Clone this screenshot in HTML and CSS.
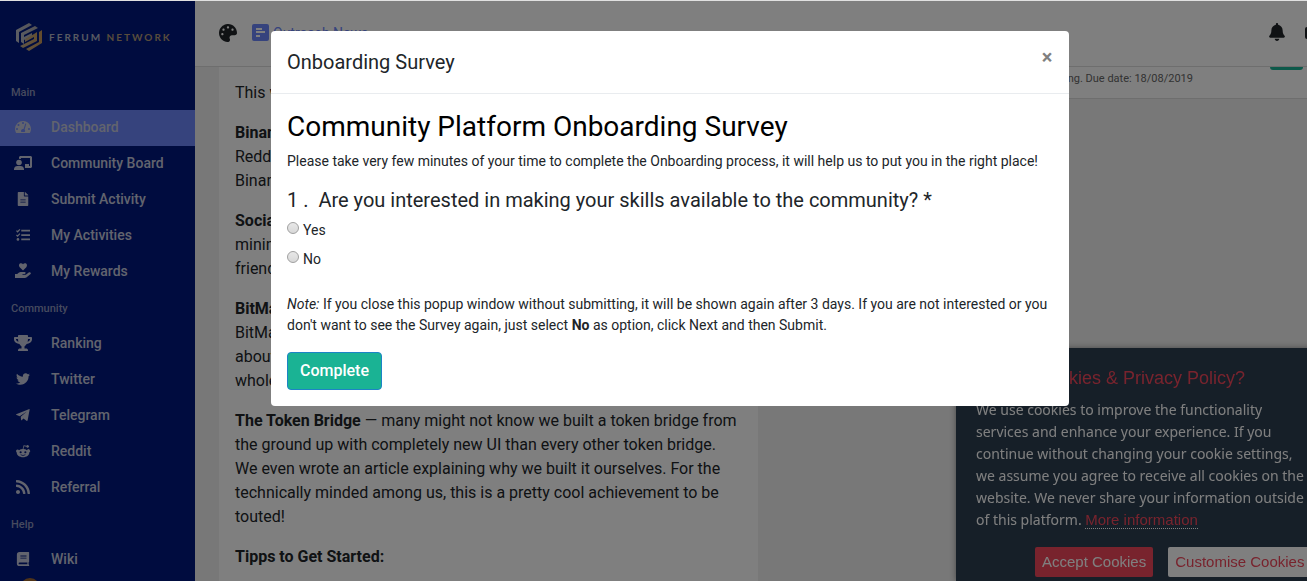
FILE: index.html
```html
<!DOCTYPE html>
<html lang="en">
<head>
    <meta charset="UTF-8">
    <meta name="viewport" content="width=device-width, initial-scale=1.0">
    <title>Ferrum Network - Dashboard</title>
    <link rel="stylesheet" href="styles.css">
</head>
<body>
    <div class="app">
        <aside class="sidebar">
            <a class="logo" href="#">
                <svg class="logo-mark" viewBox="0 0 28 30">
                    <defs>
                        <linearGradient id="silver" x1="0" y1="0" x2="1" y2="0"><stop offset="0" stop-color="#b8bcc8"/><stop offset="1" stop-color="#a8a4a8"/></linearGradient>
                        <linearGradient id="gold" x1="0" y1="0" x2="1" y2="0"><stop offset="0" stop-color="#c0ac8c"/><stop offset="1" stop-color="#c89858"/></linearGradient>
                    </defs>
                    <path fill="url(#silver)" d="M1 8 14 1l3 2L4 10v11l-3-2zM6 11l14-7 3 2L9 13v2l8-4v3l-8 4v4l-3-2z"/>
                    <path fill="url(#gold)" d="M27 8v13L14 29l-3-2 13-7V10zM19 12l3-2v9L8 26l-3-2 14-7v-2l-9 5v-3z"/>
                </svg>
                <span class="logo-text">FERRUM <span class="logo-gold">NETWORK</span></span>
            </a>
            <nav class="menu">
                <h6 class="menu-label">Main</h6>
                <a class="menu-item active" href="#">
                    <svg class="icon" viewBox="0 0 16 16"><path fill-rule="evenodd" d="M8 2a8 8 0 0 0-8 8c0 1.500.4 2.800 1.100 4h13.800A8 8 0 0 0 8 2zM8 3a1 1 0 1 1 0 2 1 1 0 0 1 0-2zM3.500 5a1 1 0 1 1 0 2 1 1 0 0 1 0-2zM2 9a1 1 0 1 1 0 2 1 1 0 0 1 0-2zM14 9a1 1 0 1 1 0 2 1 1 0 0 1 0-2zM10.300 4.500l1 .3-1.700 5.600a2 2 0 0 1 0 2.600H6.400a2 2 0 0 1 2.200-3z"/></svg>
                    Dashboard
                </a>
                <a class="menu-item" href="#">
                    <svg class="icon wide" viewBox="0 0 18 16"><path d="M6 1h11l1 1v10l-1 1h-6v-2h5V3H7v1a4 4 0 0 0-2 0V2z"/><circle cx="5" cy="7.500" r="2.800"/><path d="M0 15v-1a3.500 3.500 0 0 1 3.500-3h3A3.500 3.500 0 0 1 10 14v1z"/><path d="M11 9h4v2h-4z"/></svg>
                    Community Board
                </a>
                <a class="menu-item" href="#">
                    <svg class="icon small" viewBox="0 0 384 512"><path d="M224 136V0H24C10.700 0 0 10.700 0 24v464c0 13.300 10.700 24 24 24h336c13.300 0 24-10.700 24-24V160H248c-13.200 0-24-10.800-24-24zm64 248H96v-32h192zm0-80H96v-32h192zM384 122v6H256V0h6c6 0 12 2 17 7l98 98c5 5 7 11 7 17z"/></svg>
                    Submit Activity
                </a>
                <a class="menu-item" href="#">
                    <svg class="icon small" viewBox="0 0 16 16"><path d="M6 2h10v2H6zM6 7h10v2H6zM6 12h10v2H6z"/><path d="M.5 3l1.300 1.300L4.500 1.500M.5 8l1.300 1.300L4.500 6.500" fill="none" stroke="currentColor" stroke-width="1.400"/><circle cx="2.200" cy="13" r="1.500"/></svg>
                    My Activities
                </a>
                <a class="menu-item" href="#">
                    <svg class="icon" viewBox="0 0 16 16"><path d="M8 7.500 4.700 4.200C3.300 2.500 4.200.3 6 .3c.9 0 1.500.4 2 1 .5-.6 1.100-1 2-1 1.800 0 2.700 2.200 1.300 3.900z"/><path d="M0 11h2.200l1.500-1.200c.6-.5 1.300-.7 2-.7h4c1.300 0 1.300 1.900 0 1.900H7.500v.7h3.300l2.900-2.300c1.200-.8 2.900.5 1.900 1.700l-4.200 3.500c-.4.300-.9.400-1.400.4H0z"/></svg>
                    My Rewards
                </a>
                <h6 class="menu-label">Community</h6>
                <a class="menu-item" href="#">
                    <svg class="icon" viewBox="0 0 576 512"><path d="M552 64H448V24c0-13.300-10.700-24-24-24H152c-13.300 0-24 10.700-24 24v40H24C10.700 64 0 74.700 0 88v56c0 35.700 22.500 72.400 61.900 100.700 31.500 22.700 69.800 37.100 110 41.700C203.300 338.500 240 360 240 360v72h-48c-35.300 0-64 20.700-64 56v12c0 6.600 5.400 12 12 12h296c6.600 0 12-5.400 12-12v-12c0-35.300-28.700-56-64-56h-48v-72s36.700-21.500 68.100-73.600c40.300-4.600 78.600-19 110-41.700 39.300-28.300 61.900-65 61.900-100.700V88c0-13.300-10.700-24-24-24zM99.300 192.800C74.900 175.200 64 155.600 64 144v-16h64.200c1 32.600 5.800 61.200 12.800 86.200-15.100-5.200-29.200-12.400-41.700-21.400zM512 144c0 16.100-17.700 36.100-35.300 48.800-12.500 9-26.700 16.200-41.800 21.400 7-25 11.800-53.600 12.800-86.200H512v16z"/></svg>
                    Ranking
                </a>
                <a class="menu-item" href="#">
                    <svg class="icon small" viewBox="0 0 512 512"><path d="M459.370 151.716c.325 4.548.325 9.097.325 13.645 0 138.720-105.583 298.558-298.558 298.558-59.452 0-114.680-17.219-161.137-47.106 8.447.974 16.568 1.299 25.340 1.299 49.055 0 94.213-16.568 130.274-44.832-46.132-.975-84.792-31.188-98.112-72.772 6.498.974 12.995 1.624 19.818 1.624 9.421 0 18.843-1.300 27.614-3.573-48.081-9.747-84.143-51.980-84.143-102.985v-1.299c13.969 7.797 30.214 12.670 47.431 13.319-28.264-18.843-46.781-51.005-46.781-87.391 0-19.492 5.197-37.360 14.294-52.954 51.655 63.675 129.300 105.258 216.365 109.807-1.624-7.797-2.599-15.918-2.599-24.040 0-57.828 46.782-104.934 104.934-104.934 30.213 0 57.502 12.670 76.670 33.137 23.715-4.548 46.456-13.320 66.599-25.340-7.798 24.366-24.366 44.833-46.132 57.827 21.117-2.273 41.584-8.122 60.426-16.243-14.292 20.791-32.161 39.308-52.628 54.253z"/></svg>
                    Twitter
                </a>
                <a class="menu-item" href="#">
                    <svg class="icon small" viewBox="0 0 16 16"><path d="M15.600 1.800 13.300 14c-.2.900-.7 1-1.300.6l-3.500-2.600-1.700 1.700c-.5.500-1 .3-1-.4l-.4-3.300 7-6-8.200 5.300-3.500-1.200c-.8-.3-.8-.9.200-1.300l13.700-5.500c.7-.2 1.200.1 1 .5z"/></svg>
                    Telegram
                </a>
                <a class="menu-item" href="#">
                    <svg class="icon small" viewBox="0 0 16 16"><path fill-rule="evenodd" d="M2 6.200a1.900 1.900 0 0 0-1.200 3.400C.8 12.700 4 15 8 15s7.200-2.300 7.200-5.400A1.900 1.900 0 1 0 12.600 7 8.800 8.800 0 0 0 8.500 5.700L9.300 2.500l2.600.6a1.500 1.500 0 1 0 .1-1L8.700 1.300 7.600 5.700A8.800 8.800 0 0 0 3.400 7 1.900 1.900 0 0 0 2 6.200zM5.300 8.200a1.200 1.200 0 1 1 0 2.400 1.200 1.200 0 0 1 0-2.400zM10.700 8.200a1.200 1.200 0 1 1 0 2.400 1.200 1.200 0 0 1 0-2.400zM5.300 11.800c1.600 1 3.800 1 5.400 0v.7c-1.600 1.200-3.800 1.200-5.400 0z"/></svg>
                    Reddit
                </a>
                <a class="menu-item" href="#">
                    <svg class="icon small" viewBox="0 32 448 448"><path d="M128.081 415.959c0 35.369-28.672 64.041-64.041 64.041S0 451.328 0 415.959s28.672-64.041 64.041-64.041 64.040 28.673 64.040 64.041zm175.660 47.250c-8.354-154.600-132.185-278.587-286.950-286.950C7.656 175.765 0 183.105 0 192.253v48.069c0 8.415 6.490 15.472 14.887 16.018 111.832 7.284 201.473 96.702 208.772 208.772.547 8.397 7.604 14.887 16.018 14.887h48.069c9.149.001 16.489-7.655 15.995-16.790zm144.249.288C439.596 229.677 251.465 40.445 16.503 32.010 7.473 31.686 0 38.981 0 48.016v48.068c0 8.625 6.835 15.645 15.453 15.999 191.179 7.839 344.627 161.316 352.465 352.465.353 8.618 7.373 15.453 15.999 15.453h48.068c9.034-.001 16.329-7.474 16.005-16.504z"/></svg>
                    Referral
                </a>
                <h6 class="menu-label">Help</h6>
                <a class="menu-item" href="#">
                    <svg class="icon small" viewBox="0 0 16 16"><path fill-rule="evenodd" d="M4 0h10.500l.5.700V11l-.6.900v2.200l.6.700V16H4a3 3 0 0 1-3-3V3a3 3 0 0 1 3-3zM5 4v1h7V4zM5 6.500v1h7v-1zM4 12a1 1 0 0 0 0 2h9v-2z"/></svg>
                    Wiki
                </a>
            </nav>
            <div class="user"><span class="avatar"></span></div>
        </aside>

        <div class="main">
            <header class="topbar">
                <svg class="palette" viewBox="0 0 512 512"><path d="M204.300 5C104.900 24.400 24.800 104.300 5.200 203.400c-37 187 131.700 326.400 258.800 306.700 41.200-6.400 61.400-54.600 42.500-91.700-23.100-45.400 9.900-98.400 60.900-98.400h79.700c35.800 0 64.800-29.600 64.900-65.300C511.500 97.100 368.100-26.900 204.300 5zM96 320c-17.700 0-32-14.300-32-32s14.300-32 32-32 32 14.300 32 32-14.300 32-32 32zm32-128c-17.700 0-32-14.300-32-32s14.300-32 32-32 32 14.300 32 32-14.300 32-32 32zm128-64c-17.700 0-32-14.300-32-32s14.300-32 32-32 32 14.300 32 32-14.300 32-32 32zm128 64c-17.700 0-32-14.300-32-32s14.300-32 32-32 32 14.300 32 32-14.300 32-32 32z"/></svg>
                <a class="news" href="#">
                    <svg class="news-icon" viewBox="0 0 17 17"><path fill-rule="evenodd" d="M2 0h13a2 2 0 0 1 2 2v13a2 2 0 0 1-2 2H2a2 2 0 0 1-2-2V2a2 2 0 0 1 2-2zM4 4v2h6V4zM4 7v2h9V7zM4 11v2h4v-2z"/></svg>
                    <span>Outreach News</span>
                </a>
                <svg class="bell" viewBox="0 0 448 512"><path d="M224 512c35.320 0 63.970-28.650 63.970-64H160.030c0 35.350 28.650 64 63.970 64zm215.390-149.710c-19.320-20.760-55.470-51.990-55.470-154.290 0-77.700-54.480-139.900-127.940-155.160V32c0-17.670-14.320-32-31.980-32s-31.980 14.330-31.980 32v20.840C118.560 68.100 64.080 130.300 64.080 208c0 102.300-36.150 133.530-55.470 154.290-6 6.450-8.660 14.160-8.610 21.710.11 16.400 12.980 32 32.100 32h383.800c19.120 0 32-15.600 32.100-32 .05-7.550-2.610-15.270-8.610-21.710z"/></svg>
                <span class="profile"></span>
            </header>
            <div class="content">
                <article class="card post">
                    <p>This week at Ferrum</p>
                    <p><b>Binance Chain</b><br>Reddit and Telegram<br>Binance community</p>
                    <p><b>Social mining</b><br>mining made simple<br>friendly for everyone</p>
                    <p><b>BitMax listing</b><br>BitMax users heard<br>about us and the<br>whole network</p>
                    <p><b>The Token Bridge</b> — many might not know we built a token bridge from the ground up with completely new UI than every other token bridge. We even wrote an article explaining why we built it ourselves. For the technically minded among us, this is a pretty cool achievement to be touted!</p>
                    <p><b>Tipps to Get Started:</b></p>
                </article>
                <section class="card task">
                    <span class="due">Pending. Due date: 18/08/2019</span>
                    <span class="tag"></span>
                </section>
            </div>
        </div>
    </div>

    <section class="cookies">
        <h4 class="cookies-title">Cookies &amp; Privacy Policy?</h4>
        <p class="cookies-text">We use cookies to improve the functionality<br>services and enhance your experience. If you<br>continue without changing your cookie settings,<br>we assume you agree to receive all cookies on the<br>website. We never share your information outside<br>of this platform. <a href="#">More information</a></p>
        <div class="cookies-actions">
            <button class="btn-accept" type="button">Accept Cookies</button>
            <button class="btn-customise" type="button">Customise Cookies</button>
        </div>
    </section>

    <div class="backdrop">
        <div class="modal" role="dialog" aria-labelledby="modal-title">
            <div class="modal-header">
                <h5 class="modal-title" id="modal-title">Onboarding Survey</h5>
                <button class="close" type="button" aria-label="Close">×</button>
            </div>
            <form class="modal-body">
                <h3 class="survey-title">Community Platform Onboarding Survey</h3>
                <p>Please take very few minutes of your time to complete the Onboarding process, it will help us to put you in the right place!</p>
                <fieldset class="question">
                    <legend>1 .&nbsp; Are you interested in making your skills available to the community? *</legend>
                    <label class="option"><input type="radio" name="skills" value="yes"><span>Yes</span></label>
                    <label class="option"><input type="radio" name="skills" value="no"><span>No</span></label>
                </fieldset>
                <p class="note"><i>Note:</i> If you close this popup window without submitting, it will be shown again after 3 days. If you are not interested or you don't want to see the Survey again, just select <b>No</b> as option, click Next and then Submit.</p>
                <button class="btn-complete" type="button">Complete</button>
            </form>
        </div>
    </div>
</body>
</html>
```
FILE: styles.css
```css
* {
    margin: 0;
    padding: 0;
    box-sizing: border-box;
}

body {
    font-family: Roboto, "Liberation Sans", sans-serif;
    font-size: 16px;
    line-height: 24px;
    color: #212529;
    background: #f0f0f0;
    border-top: 1px solid #e0e0e0;
    height: 100vh;
    overflow: hidden;
}

a {
    color: inherit;
    text-decoration: none;
}

button {
    font: inherit;
    cursor: pointer;
}

/* Layout */
.app {
    display: flex;
    height: 100%;
}

.sidebar {
    flex: 0 0 195px;
    background: #00187e;
    color: #c4c8dc;
    overflow: hidden;
}

.main {
    flex: 1;
    min-width: 0;
}

/* Sidebar */
.logo {
    display: flex;
    align-items: center;
    gap: 6px;
    height: 73px;
    padding: 0 0 2px 15px;
}

.logo-mark {
    width: 28px;
    height: 30px;
}

.logo-text {
    font: 700 10px/16px Lato, sans-serif;
    letter-spacing: 2px;
    color: #b0b4c4;
    white-space: nowrap;
}

.logo-gold {
    color: #b09878;
}

.menu-label {
    height: 36px;
    font-size: 11px;
    font-weight: 500;
    line-height: 38px;
    padding-left: 11px;
    color: #8c94bc;
}

.menu-item {
    display: flex;
    align-items: center;
    gap: 19px;
    height: 36px;
    padding: 0 0 2px 14px;
    font-size: 14px;
    font-weight: 500;
}

.menu-item.active {
    background: #6c86fa;
}

.icon {
    width: 18px;
    height: 16px;
    fill: currentColor;
}

.icon.small {
    height: 14px;
}

.user {
    padding-left: 20px;
}

.avatar {
    display: block;
    width: 20px;
    height: 20px;
    border-radius: 50%;
    background: #a06830;
}

/* Top bar */
.topbar {
    display: flex;
    align-items: center;
    gap: 15px;
    height: 66px;
    padding: 0 0 2px 24px;
    background: #fff;
    border-bottom: 1px solid #dcdcdc;
}

.palette,
.bell {
    width: 18px;
    height: 18px;
    fill: #212529;
}

.bell {
    margin: 0 4px 2px 0;
}

.news {
    display: flex;
    align-items: center;
    gap: 4px;
    flex: 1;
    font-size: 14px;
    color: #6c86fa;
}

.news-icon {
    width: 17px;
    height: 17px;
    fill: #6c86fa;
}

.profile {
    width: 2px;
    height: 12px;
    border-radius: 2px 0 0 2px;
    background: #212529;
}

/* Content */
.content {
    display: flex;
    align-items: flex-start;
    gap: 16px;
    padding-left: 24px;
}

.card {
    background: #fff;
}

.post {
    flex: 0 0 539px;
    padding: 14px 16px;
}

.post p {
    margin-bottom: 16px;
}

.task {
    flex: 1;
    display: flex;
    align-items: flex-start;
    justify-content: space-between;
    height: 32px;
    padding-left: 266px;
    border-bottom: 1px solid #dcdcdc;
}

.due {
    font-size: 11px;
    color: #666;
}

.tag {
    width: 33px;
    height: 3px;
    margin-right: 4px;
    border-radius: 0 0 8px 8px;
    background: #1ab394;
}

/* Cookie notice */
.cookies {
    position: fixed;
    left: 956px;
    bottom: 0;
    width: 375px;
    padding: 18px 20px 4px;
    background: #2c3e50;
    box-shadow: 0 0 6px rgba(0, 0, 0, 0.4);
    color: #fff;
    font: 14px/22px "Noto Sans", "Liberation Sans", sans-serif;
}

.cookies-title {
    margin-bottom: 9px;
    padding-left: 60px;
    font: 18px/24px "Liberation Sans", Arial, sans-serif;
    color: #f0475b;
}

.cookies-text {
    white-space: nowrap;
}

.cookies-text a {
    border-bottom: 1px dotted #fff;
    font-family: "Liberation Sans", Arial, sans-serif;
    font-size: 15px;
    color: #f0475b;
}

.cookies-actions {
    display: flex;
    gap: 15px;
    margin-top: 16px;
    padding-left: 59px;
}

.cookies-actions button {
    height: 30px;
    padding: 0 7px;
    border: 0;
    border-radius: 2px;
    font: 15px/30px "Liberation Sans", Arial, sans-serif;
    white-space: nowrap;
}

.btn-accept {
    background: #f0475b;
    color: #fff;
}

.cookies-actions .btn-customise {
    background: #fff;
    color: #f0475b;
}

/* Survey modal */
.backdrop {
    position: fixed;
    inset: 1px 0 0;
    padding: 30px 16px 0 271px;
    background: rgba(0, 0, 0, 0.5);
}

.modal {
    max-width: 798px;
    background: #fff;
    border-radius: 4px;
    font-size: 14px;
    line-height: 21px;
}

.modal-header {
    display: flex;
    align-items: flex-start;
    justify-content: space-between;
    padding: 16px;
    border-bottom: 1px solid #e9ecef;
}

.modal-title {
    font-size: 20px;
    font-weight: 400;
    line-height: 30px;
}

.close {
    width: 12px;
    border: 0;
    background: none;
    font-size: 20px;
    font-weight: 700;
    line-height: 20px;
    color: #808080;
}

.modal-body {
    padding: 16px;
}

.survey-title {
    margin-bottom: 8px;
    font-size: 28px;
    font-weight: 400;
    line-height: 33px;
    color: #000;
}

.question {
    margin-top: 16px;
    border: 0;
}

.question legend {
    margin-bottom: 8px;
    font-size: 20px;
    line-height: 24px;
}

.option {
    display: flex;
    align-items: flex-start;
    gap: 4px;
    height: 29px;
}

.option input {
    appearance: none;
    width: 12px;
    height: 12px;
    margin-top: 2px;
    border: 1px solid #a0a0a0;
    border-radius: 50%;
    background: linear-gradient(#e8e8e8, #d8d8d8);
}

.note {
    margin: 16px 0;
}

.btn-complete {
    padding: 6px 12px;
    border: 1px solid #1c84c6;
    border-radius: 4px;
    background: #1ab394;
    font-size: 16px;
    font-weight: 500;
    line-height: 24px;
    color: #fff;
}
```
